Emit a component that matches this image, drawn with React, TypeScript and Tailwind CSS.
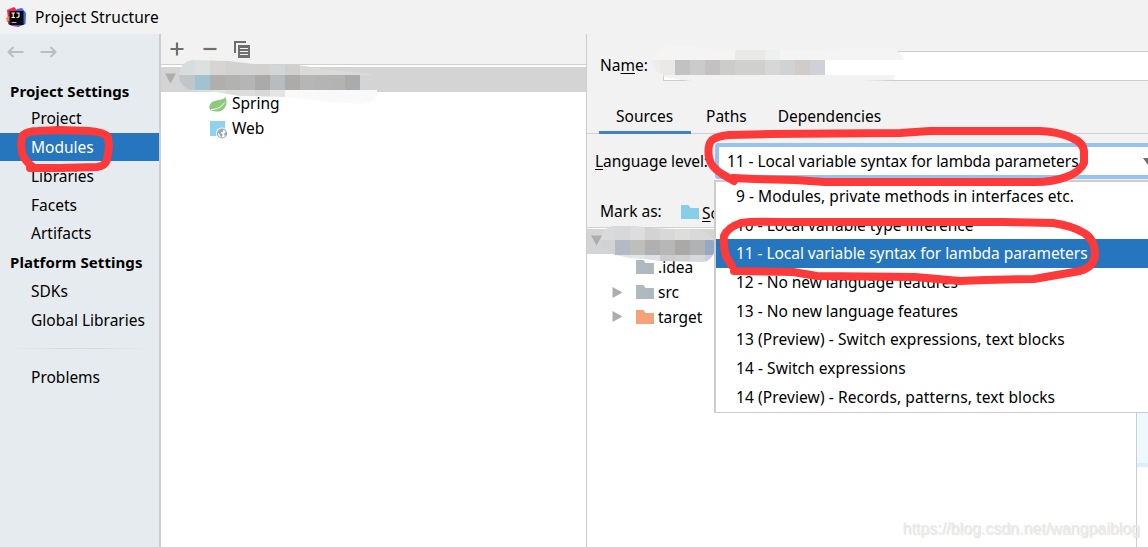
import type { ReactNode } from "react";

interface NavItem {
  label: string;
  heading?: boolean;
  active?: boolean;
}

const projectItems: NavItem[] = [
  { label: "Project Settings", heading: true },
  { label: "Project" },
  { label: "Modules", active: true },
  { label: "Libraries" },
  { label: "Facets" },
  { label: "Artifacts" },
  { label: "Platform Settings", heading: true },
  { label: "SDKs" },
  { label: "Global Libraries" },
];

const languageLevels = [
  { label: "9 - Modules, private methods in interfaces etc.", tracking: "tracking-[0.04px]" },
  { label: "10 - Local variable type inference", tracking: "tracking-[-0.03px]" },
  { label: "11 - Local variable syntax for lambda parameters", tracking: "tracking-[-0.06px]" },
  { label: "12 - No new language features", tracking: "tracking-[-0.03px]" },
  { label: "13 - No new language features", tracking: "tracking-[-0.03px]" },
  { label: "13 (Preview) - Switch expressions, text blocks", tracking: "tracking-[0.1px]" },
  { label: "14 - Switch expressions", tracking: "tracking-[0.06px]" },
  { label: "14 (Preview) - Records, patterns, text blocks", tracking: "tracking-[0.1px]" },
];

// [x, y, width, height, colour]
type Cell = [number, number, number, number, string];

const moduleCells: Cell[] = [
  [179, 60, 16, 15, "#d9dcdd"],
  [195, 60, 15, 15, "#dce0df"],
  [210, 60, 15, 15, "#d6d5d3"],
  [225, 60, 30, 15, "#d2d2d2"],
  [255, 60, 15, 15, "#d3d1d0"],
  [270, 60, 15, 15, "#d3d6d7"],
  [285, 60, 15, 15, "#cfcfce"],
  [300, 60, 75, 15, "#dadada"],
  [179, 75, 16, 15, "#c1c6ca"],
  [195, 75, 15, 15, "#a2c2d0"],
  [210, 75, 15, 15, "#b0afad"],
  [225, 75, 15, 15, "#b2b2b1"],
  [240, 75, 15, 15, "#b5b5b5"],
  [255, 75, 15, 15, "#acaaa9"],
  [270, 75, 15, 15, "#b7bcbe"],
  [285, 75, 15, 15, "#acaba9"],
  [300, 75, 15, 15, "#b6b6b4"],
  [315, 75, 15, 15, "#b3b4b4"],
  [330, 75, 15, 15, "#b5b3b0"],
  [345, 75, 15, 15, "#b2b4b6"],
  [360, 75, 18, 15, "#d5d5d5"],
  [345, 75, 15, 15, "#a9abad"],
  [179, 90, 31, 3, "#dcdedf"],
  [210, 90, 15, 5, "#dbe9d6"],
  [225, 90, 30, 15, "#dddddd"],
  [255, 90, 15, 15, "#d8d8d8"],
  [270, 90, 15, 15, "#e4e4e4"],
  [285, 90, 92, 15, "#f9f9f9"],
];

const nameCells: Cell[] = [
  [652, 46, 253, 14, "#f4f4f4"],
  [735, 50, 30, 10, "#e9e9e9"],
  [765, 50, 15, 10, "#eef0f0"],
  [652, 60, 8, 15, "#ededee"],
  [660, 60, 15, 15, "#eae9e7"],
  [675, 60, 15, 15, "#c2c2c4"],
  [690, 60, 15, 15, "#cacbcb"],
  [705, 60, 15, 15, "#c4c1c2"],
  [720, 60, 15, 15, "#cccdcb"],
  [735, 60, 30, 15, "#d0d0cf"],
  [765, 60, 15, 15, "#d7d8d6"],
  [780, 60, 15, 15, "#cfd3d4"],
  [795, 60, 15, 15, "#d1ccc7"],
  [810, 60, 15, 15, "#ced2d8"],
  [825, 60, 80, 15, "#ffffff"],
  [652, 75, 253, 6, "#f2f2f2"],
];

const rootCells: Cell[] = [
  [600, 226, 15, 14, "#dadada"],
  [615, 226, 15, 14, "#d6d8d9"],
  [630, 226, 15, 14, "#dddddd"],
  [645, 226, 15, 14, "#d3d3d3"],
  [660, 226, 15, 14, "#d8d8d8"],
  [675, 226, 15, 14, "#dddddc"],
  [690, 226, 25, 14, "#d9d9d9"],
  [600, 240, 15, 15, "#d0d2d3"],
  [615, 240, 15, 15, "#b4bac4"],
  [630, 240, 15, 15, "#bebfba"],
  [645, 240, 15, 15, "#b0b0b0"],
  [660, 240, 15, 15, "#b7b7b7"],
  [675, 240, 15, 15, "#aba9a7"],
  [690, 240, 15, 15, "#b0b2b3"],
  [705, 240, 10, 15, "#98a8c0"],
  [615, 255, 30, 10, "#e3e5e6"],
  [645, 255, 15, 10, "#dce1e5"],
  [660, 255, 15, 10, "#cccccc"],
  [675, 255, 15, 10, "#d0d0d0"],
  [690, 255, 15, 10, "#d5d9df"],
  [705, 255, 10, 10, "#c4d0e2"],
];

function Cells({ cells, clip }: { cells: Cell[]; clip: string }) {
  return (
    <g clipPath={clip} shapeRendering="crispEdges">
      {cells.map(([x, y, w, h, fill], i) => (
        <rect key={i} x={x} y={y} width={w} height={h} fill={fill} />
      ))}
    </g>
  );
}

// Mosaic patches that hide the module names
function Redactions() {
  return (
    <svg className="pointer-events-none absolute inset-0" width="1148" height="547">
      <defs>
        <clipPath id="module-patch">
          <path d="M192 60 L228 61 L262 65 L298 65 L325 69 L345 71 L372 74 L365 89 L377 90 L377 95 Q374 103 363 104 L330 102 L285 97 L240 96 L215 92 L192 91 Q179 86 179 76 Q180 62 192 60Z" />
        </clipPath>
        <clipPath id="name-patch">
          <path d="M664 47 L692 46 L710 49 L800 50 L860 48 L890 48 Q901 50 904 60 L893 80 L863 81 L691 81 L675 79 L664 77 L663 74 Q652 72 652 60Z" />
        </clipPath>
        <clipPath id="root-patch">
          <path d="M612 226 L635 226 L650 228 L700 230 Q715 236 715 246 Q714 260 704 262 L660 261 L645 259 L630 258 L615 255 Q600 248 601 238 Q604 228 612 226Z" />
        </clipPath>
      </defs>
      <Cells cells={moduleCells} clip="url(#module-patch)" />
      <Cells cells={nameCells} clip="url(#name-patch)" />
      <Cells cells={rootCells} clip="url(#root-patch)" />
    </svg>
  );
}

// Hand drawn red markers around the highlighted controls
function Markers() {
  return (
    <svg
      className="pointer-events-none absolute inset-0"
      width="1148"
      height="547"
      fill="none"
      stroke="#fd3a39"
      strokeWidth="8"
      strokeLinecap="round"
      strokeLinejoin="round"
    >
      <path d="M33 167 Q24 161 22 152 Q20 141 23 135 Q28 131 38 131 L60 130 L89 131 Q104 132 108 137 L109 147 L107 160 Q105 166 97 167 L60 168 L30 168" />
      <path d="M734 181 L722 174 Q711 167 709 158 Q707 145 712 140 Q718 136 729 135 L770 134 L900 133 L930 131 L1040 131 Q1060 132 1072 138 Q1084 143 1084 152 L1084 163 Q1080 172 1066 177 Q1053 182 1035 182 L990 182 L825 182 L795 180 L755 179 L733 178" />
      <path d="M732 266 L726 256 Q723 246 724 236 Q728 227 741 223 Q752 221 780 222 L1000 222 L1053 223 Q1073 226 1084 233 Q1095 239 1095 255 Q1094 267 1080 271 L1034 279 L985 280 L960 281 L915 277 L817 276 L793 272 L734 271" />
    </svg>
  );
}

function IdeaLogo() {
  return (
    <svg width="21" height="21" viewBox="0 0 21 21">
      <path d="M1 3 L8 0 L12 4 L10 12 L2 12Z" fill="#fb1f5e" />
      <path d="M11 2 L16 1 L20 6 L19.500 17 L12 20 L9 16Z" fill="#3b6ae6" />
      <path d="M0 11 L5 8 L6 15 L1 15Z" fill="#fc8432" />
      <path d="M2 14 L10 13 L13 20 L6 19 L2 17Z" fill="#9a3ed0" />
      <rect x="3.500" y="4" width="14" height="14" fill="#0a0508" />
      <path d="M5.500 6 H9 M7.200 6 V10.500 M5.500 10.500 H9 M10.500 6 H13 V9.500 Q12.700 10.500 10.500 10.500" fill="none" stroke="#fff" strokeWidth="1.100" />
      <path d="M5.500 15.500 H10.500" stroke="#bbb" strokeWidth="1" />
    </svg>
  );
}

function Arrow({ flip = false }: { flip?: boolean }) {
  return (
    <svg width="17" height="12" viewBox="0 0 17 12" className={flip ? "-scale-x-100" : ""}>
      <path d="M16.500 6 H1.500 M6.500 1 L1.500 6 L6.500 11" fill="none" stroke="#bcbdbe" strokeWidth="2" />
    </svg>
  );
}

function FolderIcon({ color }: { color: string }) {
  return (
    <svg width="18" height="14" viewBox="0 0 18 14" className="shrink-0">
      <path d="M0 0 H7.500 L9.500 3 H18 V14 H0Z" fill={color} />
    </svg>
  );
}

function SpringIcon() {
  return (
    <svg width="18" height="15" viewBox="0 0 18 15" className="shrink-0">
      <path d="M16.500 0 C14 4 7 2 2.500 5.500 C-.5 8.500 0 12 2 13.500 C7 15.500 13 15 16 10.500 C18 7 18 4 16.500 0Z" fill="#8fc97b" />
      <path d="M2 12.500 C8 12.500 13 10 15.500 5.500" fill="none" stroke="#fff" strokeWidth="1" />
    </svg>
  );
}

function WebIcon() {
  return (
    <svg width="19" height="18" viewBox="0 0 19 18" className="shrink-0">
      <rect x="1" y="0" width="15" height="15" fill="#8ed2ec" />
      <circle cx="13" cy="12.500" r="6" fill="#fff" />
      <circle cx="13" cy="12.500" r="4.500" fill="#fff" stroke="#98a5b2" strokeWidth="1.200" />
      <path d="M8.500 11 L12 8 L14.500 8.500 L14 10.500 L11.500 11.500 L13.500 13.500 L12.500 16.500 L11 15 L10.500 13Z M15.500 12 L17.500 11.500 L16.500 15 L15 14Z" fill="#98a5b2" />
    </svg>
  );
}

function Triangle({ open = false }: { open?: boolean }) {
  return (
    <svg width="11" height="11" viewBox="0 0 11 11" className="shrink-0">
      <path d={open ? "M0 0.500 H11 L5.500 10.500Z" : "M0.500 0 L10.500 5.500 L0.500 11Z"} fill="#adadad" />
    </svg>
  );
}

function TreeRow({ icon, label, expandable = false }: { icon: ReactNode; label: string; expandable?: boolean }) {
  return (
    <div className="flex h-[24.8px] items-center pt-[2px] pl-[25px]">
      <span className="flex w-6 shrink-0">{expandable && <Triangle />}</span>
      {icon}
      <span className="pl-1">{label}</span>
    </div>
  );
}

function Sidebar() {
  return (
    <aside className="flex w-[161px] shrink-0 flex-col border-r-2 border-[#cccfd1] bg-[#e6ebef]">
      <div className="flex gap-4 pt-3 pl-[7px]">
        <Arrow />
        <Arrow flip />
      </div>
      <nav className="pt-[17px]">
        {projectItems.map((item) => (
          <div
            key={item.label}
            className={`flex h-[28.8px] items-center first:pt-1 ${
              item.heading ? "pl-[10px] text-[15px] font-bold tracking-[0.08px]" : "pl-[31px]"
            } ${item.active ? "bg-[#2675bf] text-white" : ""}`}
          >
            {item.label}
          </div>
        ))}
      </nav>
      <div className="mx-2 mt-[14px] h-px bg-linear-to-r from-transparent via-[#d4d6d8] to-transparent" />
      <div className="mt-[13px] flex h-[28.8px] items-center pl-[31px]">Problems</div>
    </aside>
  );
}

function ModuleList() {
  return (
    <section className="flex w-[426px] shrink-0 flex-col border-r border-[#cdcdcd] bg-white">
      <div className="flex h-[31px] items-center gap-[19px] border-b border-[#d1d1d1] bg-[#f2f2f2] pl-[9px]">
        <svg width="14" height="14" viewBox="0 0 14 14">
          <path d="M7 0.500 V13.500 M0.500 7 H13.500" stroke="#6e6e6e" strokeWidth="2.200" />
        </svg>
        <svg width="14" height="14" viewBox="0 0 14 14">
          <path d="M0.500 7 H13.500" stroke="#6e6e6e" strokeWidth="2.200" />
        </svg>
        <svg width="16" height="17" viewBox="0 0 16 17" className="-ml-[2px]">
          <path d="M1 12 V1 H12" fill="none" stroke="#6e6e6e" strokeWidth="2" />
          <rect x="4" y="4" width="12" height="13" fill="#6e6e6e" />
          <path d="M6 7.500 H14 M6 10.500 H14 M6 13.500 H14" stroke="#f2f2f2" strokeWidth="1.200" />
        </svg>
      </div>
      <div className="mt-[2px] flex h-[25px] items-center bg-[#d4d4d4] pb-[3px] pl-1">
        <Triangle open />
      </div>
      <div className="flex h-[25px] items-center pl-12">
        <SpringIcon />
        <span className="pb-1 pl-[5px]">Spring</span>
      </div>
      <div className="flex h-[25px] items-center pl-12">
        <WebIcon />
        <span className="pb-1 pl-1">Web</span>
      </div>
    </section>
  );
}

function LanguagePopup() {
  return (
    <div className="absolute top-[180px] left-[714px] h-[233px] w-[440px] border-t-2 border-b border-l-2 border-[#cdcdcd] bg-white">
      {languageLevels.map(({ label, tracking }) => (
        <div
          key={label}
          className={`flex h-[28.7px] items-center pl-5 first:-mt-[0.5px] ${tracking} ${
            label.startsWith("11") ? "bg-[#2675bf] text-white" : ""
          }`}
        >
          {label}
        </div>
      ))}
    </div>
  );
}

function ModuleEditor() {
  return (
    <main className="flex min-w-0 flex-1 flex-col overflow-hidden bg-[#f2f2f2]">
      <div className="mt-[17px] flex h-[30px] items-center pl-[13px]">
        <span className="w-[63px] shrink-0 pb-[2px]">
          Na<span className="underline underline-offset-2">m</span>e:
        </span>
        <div className="h-[30px] flex-1 border-y border-l border-[#cdcdcd] bg-white" />
      </div>
      <div className="mt-[19px] flex h-[34px] border-b border-[#d1d1d1] pl-3">
        <span className="z-10 -mb-px h-[34px] w-[92px] border-b-3 border-[#4083c9] pt-[6px] pl-[17px]">Sources</span>
        <span className="pt-[6px] pl-[15px]">Paths</span>
        <span className="pt-[6px] pl-[31px]">Dependencies</span>
      </div>
      <div className="mt-[9px] flex h-[36px] items-center pl-2">
        <span className="w-[120px] shrink-0 overflow-hidden pb-px tracking-[-0.05px]">
          <span className="underline underline-offset-2">L</span>anguage level:
        </span>
        <div className="flex h-[36px] flex-1 items-center justify-between rounded-l border-4 border-r-0 border-[#97c3f3] bg-white pl-2 tracking-[-0.06px]">
          11 - Local variable syntax for lambda parameters
          <svg width="5" height="8" viewBox="0 0 5 8" className="shrink-0">
            <path d="M0 1 H10 L5 8Z" fill="#6e6e6e" />
          </svg>
        </div>
      </div>
      <div className="mt-[17px] flex h-[32px] items-center border-b border-[#d1d1d1] pl-[13px]">
        <span className="w-[81px] shrink-0 pb-[2px]">Mark as:</span>
        <FolderIcon color="#87cfe9" />
        <span className="pt-[2px] pl-[3px]">
          <span className="underline underline-offset-2">S</span>o
        </span>
      </div>
      <div className="flex flex-1 bg-white">
        <div className="w-[549px] shrink-0 pt-px">
          <div className="flex h-[25px] items-center bg-[#d4d4d4] pb-[2px] pl-1">
            <Triangle open />
          </div>
          <TreeRow icon={<FolderIcon color="#afb9c0" />} label=".idea" />
          <TreeRow icon={<FolderIcon color="#afb9c0" />} label="src" expandable />
          <TreeRow icon={<FolderIcon color="#f5a278" />} label="target" expandable />
        </div>
        <div className="flex-1 border-l border-[#cdcdcd]">
          <div className="h-[239px] border-b-4 border-[#daf0fd] bg-[#eff8ff]" />
        </div>
      </div>
    </main>
  );
}

export default function App() {
  return (
    <div className="relative flex h-[547px] w-[1148px] flex-col overflow-hidden bg-[#f2f2f2] font-['Noto_Sans','Open_Sans',sans-serif] text-[15.5px] leading-5 whitespace-nowrap text-black">
      <header className="flex h-[34px] shrink-0 items-center pl-[6px]">
        <IdeaLogo />
        <span className="pl-2 tracking-[0.1px]">Project Structure</span>
      </header>
      <div className="flex min-h-0 flex-1">
        <Sidebar />
        <ModuleList />
        <ModuleEditor />
      </div>
      <Redactions />
      <LanguagePopup />
      <Markers />
      <div className="absolute right-[8px] bottom-[8px] font-['Liberation_Sans',sans-serif] text-[16px] text-[#ebebeb] [text-shadow:1px_1px_1px_#e0e0e0]">
        https://blog.csdn.net/wangpaiblog
      </div>
    </div>
  );
}
